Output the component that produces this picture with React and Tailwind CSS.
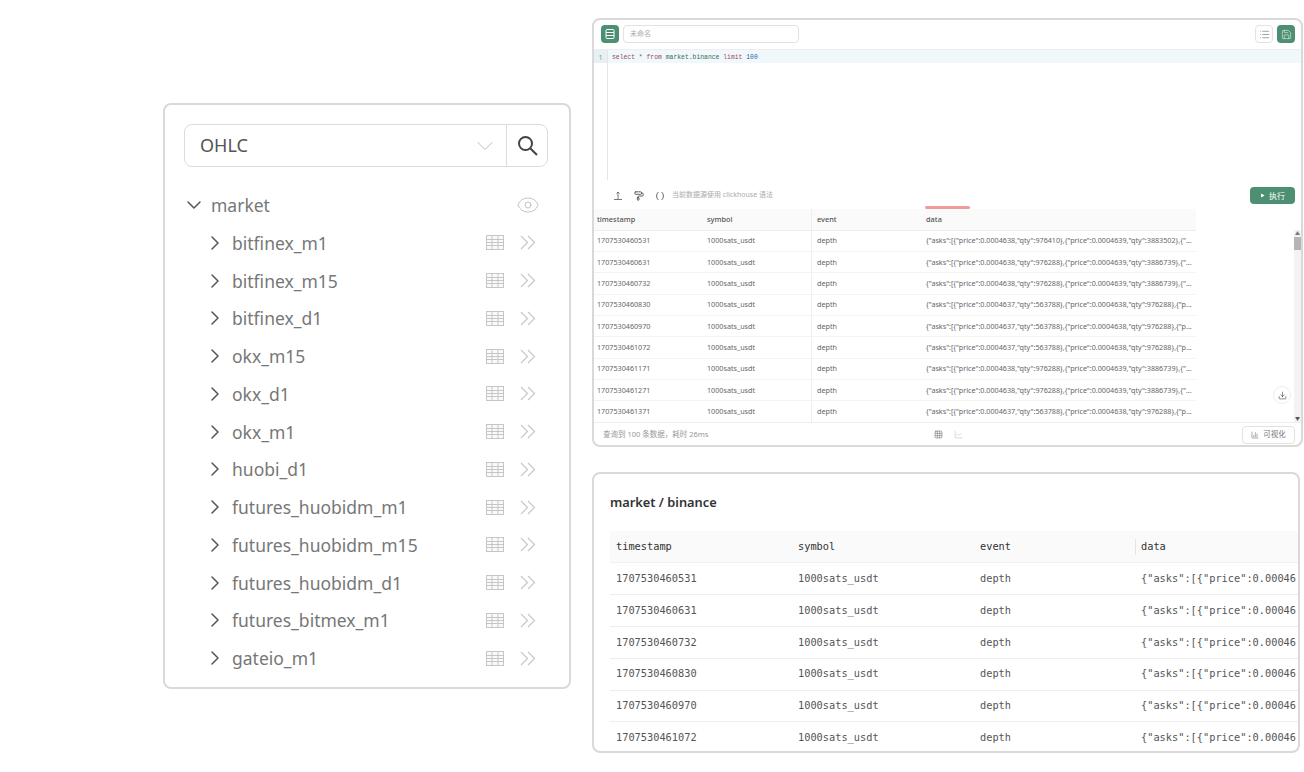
import React from "react";
import { ChevronDown, ChevronRight, Eye, List, Save, PaintRoller, Download, Play, ChartLine, ChartColumn, Grid3x3 } from "lucide-react";

const sans = "font-['Noto_Sans','Noto_Sans_CJK_SC',sans-serif]";
const mono = "font-['DejaVu_Sans_Mono',monospace]";

const tables = ["bitfinex_m1", "bitfinex_m15", "bitfinex_d1", "okx_m15", "okx_d1", "okx_m1", "huobi_d1", "futures_huobidm_m1", "futures_huobidm_m15", "futures_huobidm_d1", "futures_bitmex_m1", "gateio_m1"];

const d1 = '{"asks":[{"price":0.0004638,"qty":976410},{"price":0.0004639,"qty":3883502},{"...';
const d2 = '{"asks":[{"price":0.0004638,"qty":976288},{"price":0.0004639,"qty":3886739},{"...';
const d3 = '{"asks":[{"price":0.0004637,"qty":563788},{"price":0.0004638,"qty":976288},{"p...';
const rows = [
  ["1707530460531", d1],
  ["1707530460631", d2],
  ["1707530460732", d2],
  ["1707530460830", d3],
  ["1707530460970", d3],
  ["1707530461072", d3],
  ["1707530461171", d2],
  ["1707530461271", d2],
  ["1707530461371", d3],
];

function TableIcon() {
  return (
    <svg width="18" height="15" viewBox="0 0 18 15" fill="none" stroke="#c6c6c6" strokeWidth="1">
      <rect x="0.5" y="0.5" width="17" height="14" fill="#fafafa" />
      <path d="M0.5 4.5h17M0.5 7.5h17M0.5 10.5h17M6 0.5v14M12 0.5v14" />
    </svg>
  );
}

function DoubleArrow() {
  return (
    <svg width="16" height="15" viewBox="0 0 16 15" fill="none" stroke="#c8c8c8" strokeWidth="1.2">
      <path d="M1 1l6.5 6.5L1 14M8 1l6.5 6.5L8 14" />
    </svg>
  );
}

function TreePanel() {
  return (
    <div className={`w-[408px] h-[586px] mt-[103px] shrink-0 rounded-lg border-2 border-[#d9d9d9] bg-white pt-[19px] pl-[19px] pr-[21px] ${sans}`}>
      <div className="flex h-[43px] rounded-lg border border-[#dcdcdc]">
        <div className="flex-1 flex items-center pl-[15px] pr-[7px] text-[18px] text-[#555]">
          <span className="flex-1">OHLC</span>
          <ChevronDown size={28} strokeWidth={0.8} className="text-[#b5b5b5]" />
        </div>
        <div className="w-[41px] flex items-center justify-center border-l border-[#dcdcdc]">
          <svg width="21" height="21" viewBox="0 0 21 21" fill="none" stroke="#444" strokeWidth="2">
            <circle cx="8.5" cy="8.5" r="6.5" />
            <path d="M13.2 13.2L20 20" />
          </svg>
        </div>
      </div>
      <div className="mt-[19px] flex items-center h-[38px] pr-[8px] text-[17.5px] text-[#777]">
        <ChevronDown size={24} strokeWidth={1.5} className="-ml-[2px] text-[#555]" />
        <span className="ml-[5px] flex-1">market</span>
        <Eye size={24} strokeWidth={1} className="text-[#c4c4c4]" />
      </div>
      {tables.map((t) => (
        <div key={t} className="flex items-center h-[37.75px] pl-[19px] pr-[12px] text-[17.5px] text-[#777]">
          <ChevronRight size={24} strokeWidth={1.5} className="text-[#555]" />
          <span className="ml-[5px] flex-1">{t}</span>
          <TableIcon />
          <span className="ml-[16px] flex">
            <DoubleArrow />
          </span>
        </div>
      ))}
    </div>
  );
}

function QueryCard() {
  return (
    <div className={`relative w-[711px] h-[429px] rounded-lg border-2 border-[#d9d9d9] bg-white overflow-hidden ${sans}`}>
      <div className="flex items-center h-[30px] pl-[7px] pr-[6px] pb-[1px] border-b border-[#eeeeee]">
        <div className="w-[18px] h-[18px] rounded bg-[#4c8f72] flex items-center justify-center">
          <svg width="12" height="12" viewBox="0 0 12 12" fill="none" stroke="#fff" strokeWidth="1">
            <rect x="2" y="1.5" width="8" height="9" rx="1" />
            <path d="M2 4.5h8M2 7.5h8" />
          </svg>
        </div>
        <div className="ml-[4px] w-[176px] h-[18px] rounded border border-[#e2e2e2] pl-[6px] text-[7px] leading-[16px] text-[#aaa]">未命名</div>
        <div className="flex-1" />
        <div className="w-[18px] h-[18px] rounded border border-[#e2e2e2] flex items-center justify-center">
          <List size={11} strokeWidth={1.2} className="text-[#555]" />
        </div>
        <div className="ml-[4px] w-[18px] h-[18px] rounded bg-[#4c8f72] flex items-center justify-center">
          <Save size={11} strokeWidth={1.2} className="text-white" />
        </div>
      </div>
      <div className="h-[130px] flex">
        <div className="w-[14px] border-r border-[#e5e5e5]">
          <div className="h-[13px] bg-[#e6f1f5] text-[6.5px] leading-[15px] text-center text-[#888]">1</div>
        </div>
        <div className="flex-1">
          <div className="h-[13px] bg-[#f1f8fb] pl-[4px] font-['Liberation_Mono',monospace] text-[6.4px] leading-[15px] whitespace-pre">
            <span className="text-[#9c4a5f]">select</span>
            <span className="text-[#666]"> * </span>
            <span className="text-[#9c4a5f]">from</span>
            <span className="text-[#3d6b5a]"> market.binance </span>
            <span className="text-[#9c4a5f]">limit</span>
            <span className="text-[#2a5d9c]"> 100</span>
          </div>
        </div>
      </div>
      <div className="h-[29px] flex items-center pl-[19px] pr-[6px] pt-[2px]">
        <svg width="10" height="10" viewBox="0 0 10 10" fill="none" stroke="#666" strokeWidth="0.9">
          <path d="M5 1v7M3.5 2.5L5 1l1.5 1.5M1 8.5h8" />
        </svg>
        <PaintRoller size={10} strokeWidth={2} className="ml-[11px] text-[#444]" />
        <svg width="10" height="10" viewBox="0 0 10 10" fill="none" stroke="#666" strokeWidth="1" className="ml-[11px]">
          <path d="M3.5 1C1 3 1 7 3.5 9M6.5 1C9 3 9 7 6.5 9" />
        </svg>
        <span className="ml-[7px] text-[7px] text-[#aaa]">当前数据源使用 clickhouse 语法</span>
        <div className="flex-1" />
        <div className="w-[45px] h-[17px] rounded bg-[#4c8f72] flex items-center justify-center text-[8px] text-white">
          <Play size={5} fill="#fff" strokeWidth={0} />
          <span className="ml-[4px]">执行</span>
        </div>
      </div>
      <div className="h-[214px] flex overflow-hidden border-b border-[#eeeeee]">
        <div className="w-[602px] text-[7.2px] text-[#666]">
          <div className="flex h-[21.5px] items-center bg-[#fafafa] border-b border-[#eeeeee] text-[7.4px] text-[#555] font-medium">
            <div className="w-[113px] pl-[3px]">timestamp</div>
            <div className="w-[104px]">symbol</div>
            <div className="w-[115px] self-stretch flex items-center pl-[5px] border-l border-[#eeeeee]">event</div>
            <div className="flex-1">data</div>
          </div>
          {rows.map((r) => (
            <div key={r[0]} className="flex h-[21.35px] items-center border-b border-[#f3f3f3]">
              <div className="w-[113px] pl-[3px]">{r[0]}</div>
              <div className="w-[104px]">1000sats_usdt</div>
              <div className="w-[115px] self-stretch flex items-center pl-[5px] border-l border-[#eeeeee]">depth</div>
              <div className="flex-1 whitespace-nowrap">{r[1]}</div>
            </div>
          ))}
        </div>
        <div className="flex-1" />
        <div className="w-[7px] mt-[21px] bg-[#f3f3f3] flex flex-col items-center">
          <div className="h-[7px] text-[5px] leading-[7px] text-[#777]">▲</div>
          <div className="w-full h-[13px] bg-[#b5b5b5]" />
          <div className="flex-1" />
          <div className="h-[7px] text-[5px] leading-[7px] text-[#555]">▼</div>
        </div>
      </div>
      <div className="relative h-[23px] flex items-center pl-[9px] pr-[6px] text-[7.5px] text-[#999]">
        <span>查询到 100 条数据，耗时 26ms</span>
        <div className="flex-1" />
        <div className="w-[51px] mr-[257px] flex items-center gap-[11px]">
          <Grid3x3 size={9} strokeWidth={1.2} className="text-[#555]" />
          <ChartLine size={9} strokeWidth={1} className="text-[#999]" />
        </div>
        <div className="w-[53px] h-[18px] rounded border border-[#e2e2e2] flex items-center justify-center text-[#777]">
          <ChartColumn size={8} strokeWidth={1.5} className="text-[#555]" />
          <span className="ml-[4px]">可视化</span>
        </div>
      </div>
      <div className="absolute left-[331px] top-[186px] w-[45px] h-[3px] rounded-sm bg-[#f29b9b]" />
      <div className="absolute left-[679px] top-[366px] w-[18px] h-[18px] rounded-full border border-[#eeeeee] bg-white flex items-center justify-center">
        <Download size={9} strokeWidth={1.5} className="text-[#333]" />
      </div>
    </div>
  );
}

function PreviewCard() {
  return (
    <div className={`w-[708px] h-[281px] rounded-lg border-2 border-[#d9d9d9] bg-white overflow-hidden pl-[16px] ${sans}`}>
      <div className="h-[57px] pt-[18px] text-[12.8px] leading-[20px] font-semibold text-[#333]">market / binance</div>
      <div className={`${mono} text-[10.3px] text-[#555]`}>
        <div className="flex h-[32px] items-center bg-[#fafafa] border-b border-[#f0f0f0] text-[#333]">
          <div className="w-[182px] pl-[6px] shrink-0">timestamp</div>
          <div className="w-[182px] pl-[6px] shrink-0">symbol</div>
          <div className="w-[161px] pl-[6px] shrink-0">event</div>
          <div className="flex-1 self-stretch flex items-center pl-[6px] relative">
            <span className="absolute left-0 top-[8px] h-[16px] border-l border-[#e5e5e5]" />
            data
          </div>
        </div>
        {rows.slice(0, 6).map((r) => (
          <div key={r[0]} className="flex h-[31.9px] items-center border-b border-[#eeeeee]">
            <div className="w-[182px] pl-[6px] shrink-0">{r[0]}</div>
            <div className="w-[182px] pl-[6px] shrink-0">1000sats_usdt</div>
            <div className="w-[161px] pl-[6px] shrink-0">depth</div>
            <div className="flex-1 pl-[6px] whitespace-nowrap">{r[1].slice(0, 25)}</div>
          </div>
        ))}
      </div>
    </div>
  );
}

export default function App() {
  return (
    <div className="w-[1304px] h-[772px] bg-white flex pl-[163px] gap-[21px] overflow-hidden">
      <TreePanel />
      <div className="pt-[18px] flex flex-col gap-[25px]">
        <QueryCard />
        <PreviewCard />
      </div>
    </div>
  );
}
